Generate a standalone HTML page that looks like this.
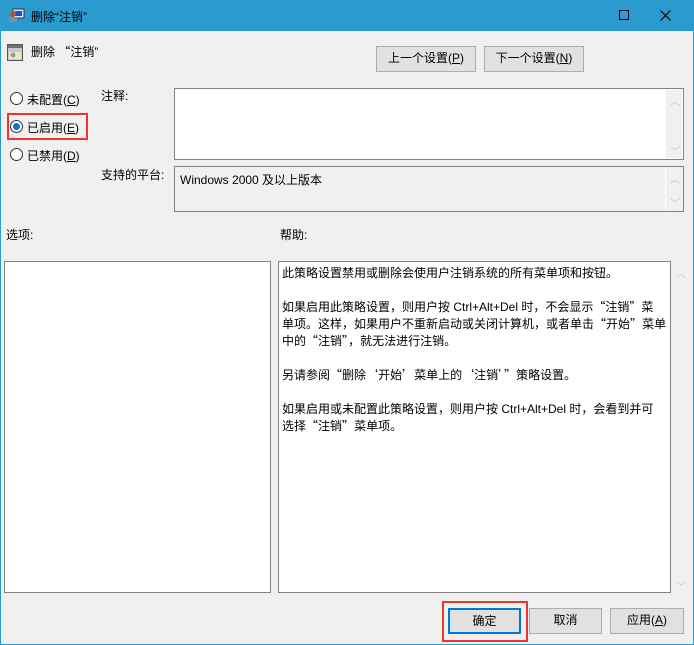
<!DOCTYPE html>
<html><head><meta charset="utf-8"><style>
*{margin:0;padding:0;box-sizing:border-box}
body{width:694px;height:645px;position:relative;background:#f0f0f0;font-family:"Liberation Sans","Noto Sans CJK SC",sans-serif;font-size:12px;color:#000;overflow:hidden}
.a{position:absolute;white-space:nowrap}
.q{font-family:"Noto Sans CJK SC",sans-serif;line-height:0}
.btn{position:absolute;background:#e1e1e1;border:1px solid #adadad;text-align:center;line-height:23px}
.box{position:absolute;border:1px solid #828282;background:#fff}
.rad{position:absolute;width:13px;height:13px;border:1px solid #333;border-radius:50%;background:#fff}
.sb{position:absolute;color:#c0c0c0;font-size:10px}
</style></head><body>
<div class="a" style="left:0;top:0;width:694px;height:31px;background:#2b9bcf"></div>
<div class="a" style="left:0;top:0;width:1px;height:645px;background:#2b9bcf"></div>
<div class="a" style="left:693px;top:0;width:1px;height:645px;background:#2b9bcf"></div>
<div class="a" style="left:0;top:644px;width:694px;height:1px;background:#2b9bcf"></div>
<svg class="a" style="left:8px;top:8px" width="17" height="15"><rect x="5" y="1" width="11" height="9" fill="#dfe8f8" stroke="#334"/><rect x="7" y="3" width="7" height="5" fill="#2050c0"/><circle cx="5" cy="6" r="3" fill="#a06030"/><rect x="1" y="9" width="8" height="5" fill="#7090b0"/></svg>
<div class="a" style="left:31px;top:8px;font-size:12px">删除“注销”</div>
<div class="a" style="left:566px;top:15px;width:10px;height:1px;background:#5a8aa8"></div>
<div class="a" style="left:619px;top:10px;width:10px;height:10px;border:1px solid #000"></div>
<svg class="a" style="left:660px;top:10px" width="11" height="11"><path d="M0.5 0.5L10.5 10.5M10.5 0.5L0.5 10.5" stroke="#000" stroke-width="1.1"/></svg>
<svg class="a" style="left:7px;top:44px" width="16" height="17"><rect x="0.5" y="0.5" width="15" height="16" fill="#c8c8d0" stroke="#555"/><rect x="1" y="1" width="14" height="3" fill="#6a7080"/><rect x="2" y="8" width="12" height="7" fill="#f0e8c0"/><circle cx="6" cy="11" r="2.5" fill="#999"/></svg>
<div class="a" style="left:31px;top:43px">删除 <span class="q">“</span>注销”</div>
<div class="btn" style="left:376px;top:46px;width:100px;height:26px">上一个设置(<u>P</u>)</div>
<div class="btn" style="left:484px;top:46px;width:100px;height:26px">下一个设置(<u>N</u>)</div>
<div class="rad" style="left:10px;top:92px"></div>
<div class="a" style="left:27px;top:91px">未配置(<u>C</u>)</div>
<div class="rad" style="left:10px;top:120px"></div>
<div class="a" style="left:13px;top:123px;width:7px;height:7px;border-radius:50%;background:#0078d7"></div>
<div class="a" style="left:27px;top:119px">已启用(<u>E</u>)</div>
<div class="a" style="left:7px;top:113px;width:81px;height:27px;border:2px solid #ee3333"></div>
<div class="rad" style="left:10px;top:148px"></div>
<div class="a" style="left:27px;top:147px">已禁用(<u>D</u>)</div>
<div class="a" style="left:101px;top:87px">注释:</div>
<div class="box" style="left:174px;top:88px;width:510px;height:72px"></div>
<div class="a" style="left:666px;top:90px;width:16px;height:68px;background:#f0f0f0"></div>
<div class="sb" style="left:670px;top:93px">︿</div>
<div class="sb" style="left:670px;top:143px">﹀</div>
<div class="a" style="left:101px;top:166px">支持的平台:</div>
<div class="box" style="left:174px;top:166px;width:510px;height:46px;background:#f0f0f0"></div>
<div class="a" style="left:665px;top:168px;width:1px;height:42px;background:#fff"></div>
<div class="sb" style="left:670px;top:171px">︿</div>
<div class="sb" style="left:670px;top:195px">﹀</div>
<div class="a" style="left:180px;top:171px">Windows 2000 及以上版本</div>
<div class="a" style="left:6px;top:226px">选项:</div>
<div class="a" style="left:280px;top:226px">帮助:</div>
<div class="box" style="left:4px;top:261px;width:267px;height:332px"></div>
<div class="box" style="left:278px;top:261px;width:393px;height:332px"></div>
<div class="sb" style="left:676px;top:265px">︿</div>
<div class="sb" style="left:676px;top:578px">﹀</div>
<div class="a" style="left:282px;top:265px;line-height:17px;white-space:nowrap;width:388px">此策略设置禁用或删除会使用户注销系统的所有菜单项和按钮。<br><br>如果启用此策略设置，则用户按 Ctrl+Alt+Del 时，不会显示<span class="q">“</span>注销<span class="q">”</span>菜<br>单项。这样，如果用户不重新启动或关闭计算机，或者单击<span class="q">“</span>开始<span class="q">”</span>菜单<br>中的<span class="q">“</span>注销<span class="q">”</span>，就无法进行注销。<br><br>另请参阅<span class="q">“</span>删除<span class="q">‘</span>开始<span class="q">’</span>菜单上的<span class="q">‘</span>注销<span class="q">’”</span>策略设置。<br><br>如果启用或未配置此策略设置，则用户按 Ctrl+Alt+Del 时，会看到并可<br>选择<span class="q">“</span>注销<span class="q">”</span>菜单项。</div>
<div class="a" style="left:442px;top:601px;width:86px;height:41px;border:2px solid #ee3333"></div>
<div class="btn" style="left:448px;top:608px;width:73px;height:26px;border:2px solid #0078d7;line-height:22px">确定</div>
<div class="btn" style="left:529px;top:608px;width:73px;height:26px">取消</div>
<div class="btn" style="left:610px;top:608px;width:74px;height:26px">应用(<u>A</u>)</div>
</body></html>
